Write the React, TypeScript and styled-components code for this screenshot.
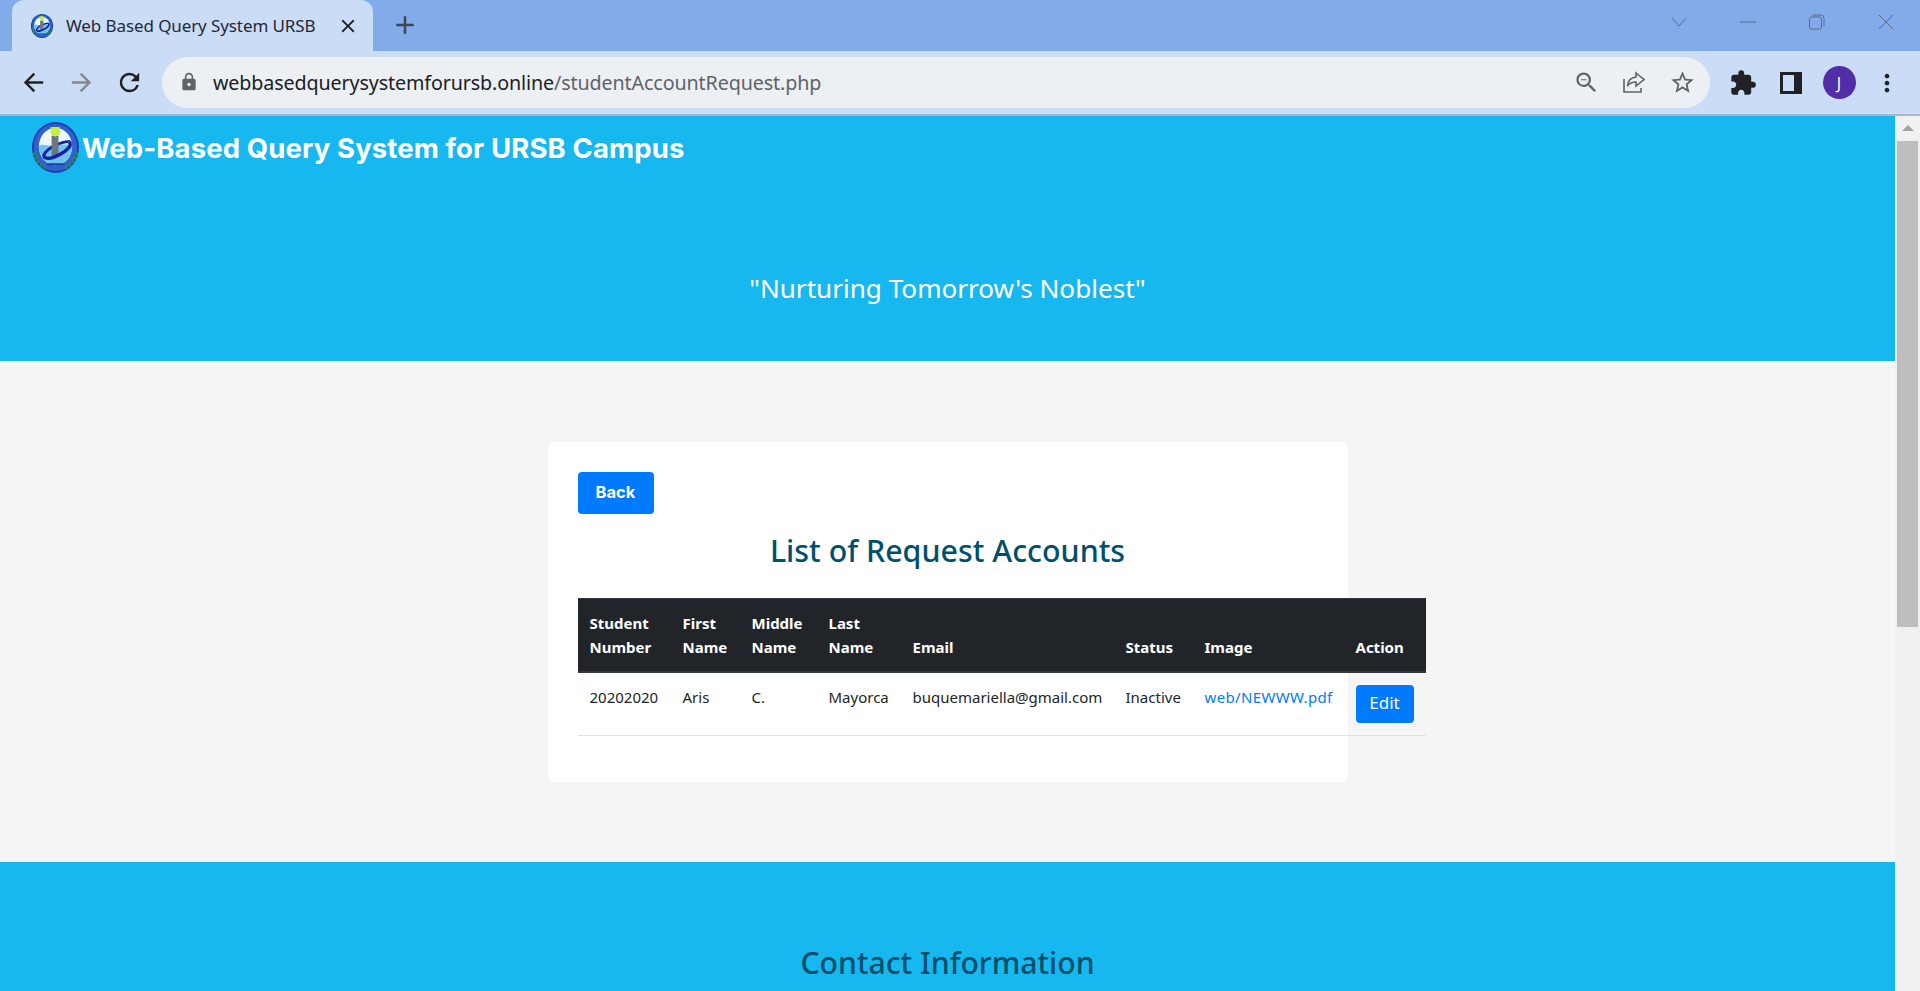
import React from 'react';
import styled, { createGlobalStyle } from 'styled-components';
import { MdArrowBack, MdArrowForward, MdRefresh, MdLock, MdExtension, MdMoreVert, MdClose, MdAdd, MdStarBorder, MdZoomOut } from 'react-icons/md';

const UI_FONT = `"Noto Sans", "Open Sans", sans-serif`;
const HEAD_FONT = `Inter, "Liberation Sans", sans-serif`;

const GlobalStyle = createGlobalStyle`
  html, body { margin: 0; padding: 0; height: 100%; overflow: hidden; }
  body { font-family: ${UI_FONT}; color: #212529; }
  * { box-sizing: border-box; }
`;

const Shell = styled.div`
  width: 1920px;
  height: 991px;
  display: flex;
  flex-direction: column;
  overflow: hidden;
`;

/* browser chrome */
const TabStrip = styled.div`
  height: 51px;
  flex: none;
  background: #83abe9;
  display: flex;
  align-items: flex-start;
  padding-left: 12px;
`;

const Tab = styled.div`
  width: 361px;
  height: 51px;
  background: #cbdcf6;
  border-radius: 12px 12px 0 0;
  display: flex;
  align-items: center;
  padding-left: 18px;
  color: #1f2937;
`;

const TabTitle = styled.span`
  margin-left: 12px;
  width: 275px;
  font-size: 17px;
  letter-spacing: -0.1px;
  white-space: nowrap;
`;

const TabClose = styled.span`
  display: flex;
  font-size: 22px;
  color: #202124;
  margin-left: -4px;
`;

const NewTab = styled.span`
  display: flex;
  font-size: 30px;
  color: #3c4657;
  margin: 10px 0 0 17px;
`;

const WindowControls = styled.div`
  margin-left: auto;
  display: flex;
  height: 44px;
  align-items: center;
`;

const WindowButton = styled.span`
  width: 69px;
  display: flex;
  justify-content: center;
  color: #5a6b85;
`;

const Toolbar = styled.div`
  height: 65px;
  flex: none;
  background: #cbdcf6;
  border-bottom: 2px solid #a9b6cc;
  display: flex;
  align-items: center;
  padding-left: 9px;
`;

const NavButton = styled.span<{ $muted?: boolean }>`
  width: 48px;
  display: flex;
  justify-content: center;
  font-size: 29px;
  color: ${p => (p.$muted ? '#84898f' : '#202124')};
`;

const AddressBar = styled.div`
  margin-left: 9px;
  width: 1548px;
  height: 51px;
  margin-top: -1px;
  border-radius: 26px;
  background: #ecf0f5;
  display: flex;
  align-items: center;
  padding-left: 17px;
`;

const LockIcon = styled.span`
  display: flex;
  font-size: 20px;
  color: #5f6368;
`;

const UrlText = styled.span`
  margin-left: 14px;
  font-size: 19.7px;
  letter-spacing: -0.12px;
  color: #202124;
  white-space: nowrap;
`;

const UrlPath = styled.span`
  color: #5f6368;
`;

const AddressActions = styled.div`
  margin-left: auto;
  display: flex;
  padding-right: 4px;
`;

const ActionIcon = styled.span`
  width: 48px;
  height: 28px;
  display: flex;
  align-items: center;
  justify-content: center;
  font-size: 27px;
  color: #5f6368;
`;

const ToolIcons = styled.div`
  margin-left: 9px;
  display: flex;
  align-items: center;
`;

const ToolIcon = styled.span`
  width: 48px;
  display: flex;
  justify-content: center;
  font-size: 28px;
  color: #202124;
`;

const Avatar = styled.span`
  width: 33px;
  height: 33px;
  border-radius: 50%;
  background: #512da8;
  color: #fff;
  font-size: 16px;
  display: flex;
  align-items: center;
  justify-content: center;
`;

/* page */
const Viewport = styled.div`
  flex: 1;
  display: flex;
  min-height: 0;
`;

const Page = styled.div`
  flex: 1;
  min-width: 0;
  display: flex;
  flex-direction: column;
  overflow: hidden;
`;

const Scrollbar = styled.div`
  width: 25px;
  flex: none;
  background: #f1f1f1;
  display: flex;
  flex-direction: column;
  align-items: center;
  padding-top: 9px;
`;

const ScrollArrow = styled.span`
  width: 0;
  height: 0;
  border-left: 6px solid transparent;
  border-right: 6px solid transparent;
  border-bottom: 6px solid #a3a3a3;
`;

const ScrollThumb = styled.div`
  margin-top: 10px;
  width: 21px;
  height: 486px;
  background: #bebebe;
`;

const Header = styled.header`
  height: 245px;
  flex: none;
  background: #17b8f0;
  color: #fff;
`;

const Brand = styled.div`
  display: flex;
  align-items: center;
  padding: 5px 0 0 30px;
`;

const BrandTitle = styled.h1`
  margin: 2px 0 0 1px;
  font-family: ${HEAD_FONT};
  font-size: 27.5px;
  font-weight: 700;
  letter-spacing: 0.12px;
  line-height: 51px;
  white-space: nowrap;
`;

const Motto = styled.p`
  margin: 96px 0 0;
  text-align: center;
  font-size: 26.1px;
  line-height: 36px;
`;

const Main = styled.main`
  height: 501px;
  flex: none;
  background: #f5f5f5;
  padding-top: 81px;
  display: flex;
  justify-content: center;
`;

const Card = styled.section`
  width: 800px;
  height: 340px;
  background: #fff;
  border-radius: 5px;
  padding: 30px;
`;

const BackButton = styled.a`
  display: block;
  width: 76px;
  height: 42px;
  border-radius: 4px;
  background: #007bff;
  color: #fff;
  font-family: ${HEAD_FONT};
  font-weight: 700;
  font-size: 16.5px;
  line-height: 41px;
  text-align: center;
`;

const Heading = styled.h2`
  margin: 16px 0 0;
  height: 68px;
  text-align: center;
  font-size: 30.4px;
  font-weight: 500;
  line-height: 42px;
  color: #004f6b;
`;

const Table = styled.table`
  width: 848px;
  table-layout: fixed;
  border-collapse: collapse;
  font-size: 15px;
  line-height: 24px;
`;

const HeadCell = styled.th<{ $width: number }>`
  width: ${p => p.$width}px;
  background: #212529;
  color: #fff;
  text-align: left;
  vertical-align: bottom;
  padding: 12px;
  font-weight: 700;
  border-top: 1px solid #32383e;
  border-bottom: 2px solid #32383e;
`;

const Cell = styled.td`
  padding: 12px;
  vertical-align: top;
  border-bottom: 1px solid #dee2e6;
  white-space: nowrap;
`;

const FileLink = styled.a`
  color: #007bff;
  letter-spacing: 0.35px;
`;

const EditButton = styled.a`
  display: block;
  width: 58px;
  height: 38px;
  border-radius: 4px;
  background: #007bff;
  color: #fff;
  font-size: 17px;
  line-height: 36px;
  text-align: center;
`;

const Footer = styled.footer`
  flex: 1;
  background: #17b8f0;
  padding-top: 81px;
`;

const FooterTitle = styled.h2`
  margin: 0;
  text-align: center;
  font-size: 30.2px;
  font-weight: 500;
  line-height: 40px;
  color: #004f6b;
`;

const Seal = ({ size }: { size: number }) => (
  <svg width={size} height={size} viewBox="0 0 50 52" style={{ flex: 'none' }}>
    <ellipse cx="25" cy="26" rx="24" ry="26" fill="#1c3fb5" />
    <ellipse cx="25" cy="26" rx="22" ry="24" fill="#2f63cc" />
    <ellipse cx="25" cy="25" rx="17" ry="19" fill="#eef9fd" />
    <path d="M8 24c5-2 9 1 17 0s11-2 17 0c0 11-7 20-17 20S8 35 8 24z" fill="#6fc4ee" />
    <path d="M3 31c2 8 7 14 14 17M47 31c-2 8-7 14-14 17" stroke="#2c8a45" strokeWidth="3" fill="none" strokeDasharray="3 1.500" />
    <path d="M38 20c-7 0-20 6-24 12" fill="none" stroke="#1420a8" strokeWidth="3" />
    <rect x="21" y="14" width="7" height="22" fill="#6f757c" />
    <path d="M20 5h9l1 7-5 3-5-3z" fill="#c8ee3c" />
    <path d="M14 32c-3 5 3 6 9 4 8-3 17-9 17-13 0-2-1-3-2-3" fill="none" stroke="#1420a8" strokeWidth="3.500" />
    <path d="M16 43h18" stroke="#1c3fb5" strokeWidth="2" />
  </svg>
);

const columns = [
  { label: ['Student', 'Number'], width: 93 },
  { label: ['First', 'Name'], width: 69 },
  { label: ['Middle', 'Name'], width: 77 },
  { label: ['Last', 'Name'], width: 84 },
  { label: ['Email'], width: 213 },
  { label: ['Status'], width: 79 },
  { label: ['Image'], width: 151 },
  { label: ['Action'], width: 82 },
];

export default function App() {
  return (
    <Shell>
      <GlobalStyle />
      <TabStrip>
        <Tab>
          <Seal size={24} />
          <TabTitle>Web Based Query System URSB</TabTitle>
          <TabClose><MdClose /></TabClose>
        </Tab>
        <NewTab><MdAdd /></NewTab>
        <WindowControls>
          <WindowButton>
            <svg width="16" height="10" viewBox="0 0 16 10"><path d="M1 1l7 8 7-8" fill="none" stroke="currentColor" /></svg>
          </WindowButton>
          <WindowButton>
            <svg width="16" height="2" viewBox="0 0 16 2"><path d="M0 1h16" stroke="currentColor" /></svg>
          </WindowButton>
          <WindowButton>
            <svg width="16" height="16" viewBox="0 0 16 16"><rect x="0.5" y="3" width="12" height="12" rx="2" fill="none" stroke="currentColor" /><path d="M3.5 1h8.5a3 3 0 0 1 3 3v8.5" fill="none" stroke="currentColor" /></svg>
          </WindowButton>
          <WindowButton>
            <svg width="16" height="16" viewBox="0 0 16 16"><path d="M1 1l14 14M15 1L1 15" stroke="currentColor" /></svg>
          </WindowButton>
        </WindowControls>
      </TabStrip>
      <Toolbar>
        <NavButton><MdArrowBack /></NavButton>
        <NavButton $muted><MdArrowForward /></NavButton>
        <NavButton><MdRefresh /></NavButton>
        <AddressBar>
          <LockIcon><MdLock /></LockIcon>
          <UrlText>webbasedquerysystemforursb.online<UrlPath>/studentAccountRequest.php</UrlPath></UrlText>
          <AddressActions>
            <ActionIcon><MdZoomOut /></ActionIcon>
            <ActionIcon>
              <svg width="24" height="24" viewBox="0 0 24 24" fill="none" stroke="currentColor" strokeWidth="1.6">
                <path d="M2 9v13h17v-4" />
                <path d="M14 3l8 6.500-8 6.500v-4c-4 0-6.500 1-8.500 4 .5-5.500 3.500-8.500 8.500-9z" />
              </svg>
            </ActionIcon>
            <ActionIcon><MdStarBorder /></ActionIcon>
          </AddressActions>
        </AddressBar>
        <ToolIcons>
          <ToolIcon><MdExtension /></ToolIcon>
          <ToolIcon>
            <svg width="22" height="22" viewBox="0 0 22 22"><path fillRule="evenodd" d="M0 0h22v22H0zM3 3v16h11V3z" fill="currentColor" /></svg>
          </ToolIcon>
          <ToolIcon><Avatar>J</Avatar></ToolIcon>
          <ToolIcon><MdMoreVert /></ToolIcon>
        </ToolIcons>
      </Toolbar>
      <Viewport>
        <Page>
          <Header>
            <Brand>
              <Seal size={51} />
              <BrandTitle>Web-Based Query System for URSB Campus</BrandTitle>
            </Brand>
            <Motto>"Nurturing Tomorrow's Noblest"</Motto>
          </Header>
          <Main>
            <Card>
              <BackButton>Back</BackButton>
              <Heading>List of Request Accounts</Heading>
              <Table>
                <thead>
                  <tr>
                    {columns.map(col => (
                      <HeadCell key={col.label.join(' ')} $width={col.width}>
                        {col.label.map((part, i) => (
                          <React.Fragment key={part}>{i > 0 && <br />}{part}</React.Fragment>
                        ))}
                      </HeadCell>
                    ))}
                  </tr>
                </thead>
                <tbody>
                  <tr>
                    <Cell>20202020</Cell>
                    <Cell>Aris</Cell>
                    <Cell>C.</Cell>
                    <Cell>Mayorca</Cell>
                    <Cell>buquemariella@gmail.com</Cell>
                    <Cell>Inactive</Cell>
                    <Cell><FileLink>web/NEWWW.pdf</FileLink></Cell>
                    <Cell><EditButton>Edit</EditButton></Cell>
                  </tr>
                </tbody>
              </Table>
            </Card>
          </Main>
          <Footer>
            <FooterTitle>Contact Information</FooterTitle>
          </Footer>
        </Page>
        <Scrollbar>
          <ScrollArrow />
          <ScrollThumb />
        </Scrollbar>
      </Viewport>
    </Shell>
  );
}
